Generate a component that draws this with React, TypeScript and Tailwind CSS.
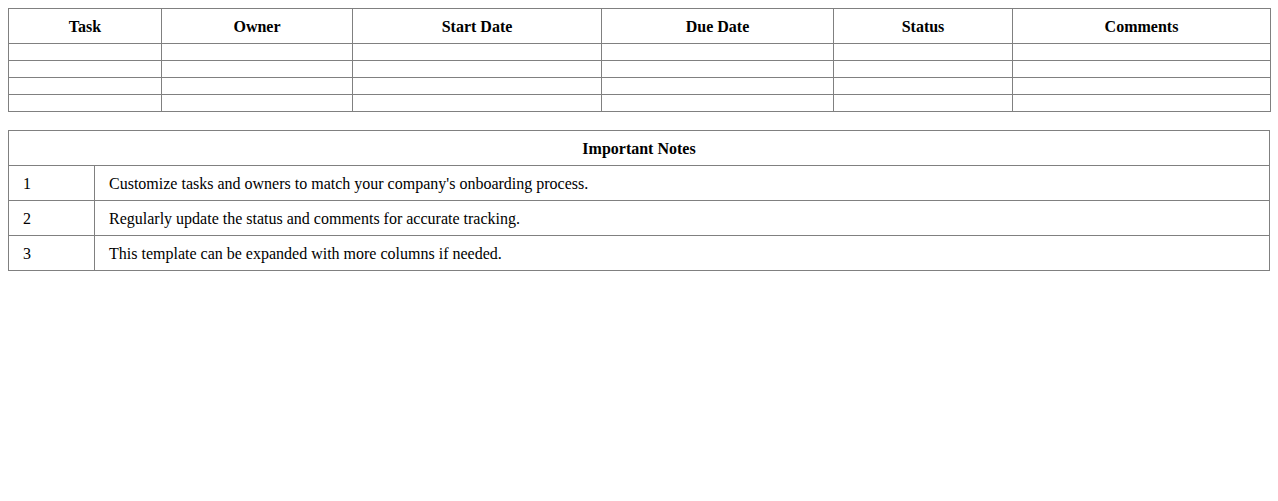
export default function App() {
  const cols = [
    { name: 'Task', w: 'w-[153px]' },
    { name: 'Owner', w: 'w-[191px]' },
    { name: 'Start Date', w: 'w-[249px]' },
    { name: 'Due Date', w: 'w-[232px]' },
    { name: 'Status', w: 'w-[179px]' },
    { name: 'Comments', w: 'w-[258px]' },
  ];
  const notes = [
    "Customize tasks and owners to match your company's onboarding process.",
    'Regularly update the status and comments for accurate tracking.',
    'This template can be expanded with more columns if needed.',
  ];
  const border = 'border border-[#808080]';
  // text cells sit a pixel low in the original, so shift the padding
  const cell = `${border} px-[14px] pt-[9px] pb-[7px]`;

  return (
    <div className="min-h-screen bg-white p-2 font-['Liberation_Serif',serif] text-[16px] leading-[18px] text-black">
      <table className="w-full table-fixed border-collapse mb-[18px]">
        <thead>
          <tr>
            {cols.map((c) => (
              <th key={c.name} className={`${cell} ${c.w} font-bold text-center`}>
                {c.name}
              </th>
            ))}
          </tr>
        </thead>
        <tbody>
          {[0, 1, 2, 3].map((r) => (
            <tr key={r}>
              {cols.map((c) => (
                <td key={c.name} className={`${border} py-2`}></td>
              ))}
            </tr>
          ))}
        </tbody>
      </table>

      <table className="w-full table-fixed border-collapse">
        <colgroup>
          <col className="w-[86px]" />
          <col />
        </colgroup>
        <thead>
          <tr>
            <th colSpan={2} className={`${cell} font-bold text-center`}>
              Important Notes
            </th>
          </tr>
        </thead>
        <tbody>
          {notes.map((n, i) => (
            <tr key={i}>
              <td className={cell}>{i + 1}</td>
              <td className={cell}>{n}</td>
            </tr>
          ))}
        </tbody>
      </table>
    </div>
  );
}
